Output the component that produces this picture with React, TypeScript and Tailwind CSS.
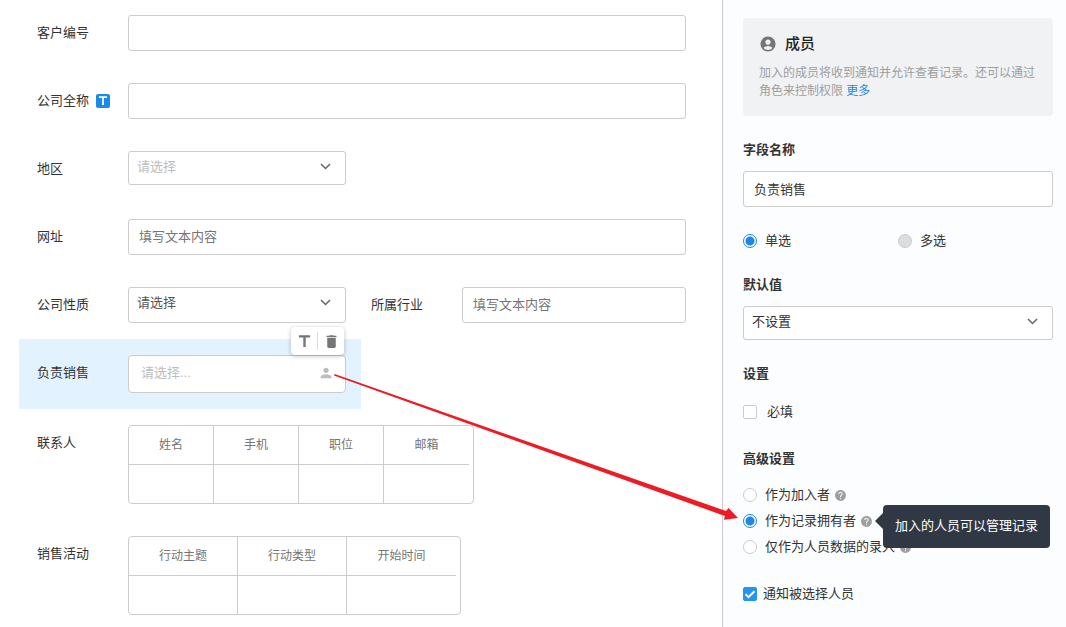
import { useState } from "react";
import type { ReactNode } from "react";
import { MdAccountCircle, MdDelete, MdHelp, MdPerson, MdTitle } from "react-icons/md";

const inputClass =
  "block h-9 w-full rounded-[3px] border border-[#ccc] bg-white px-[10px] pb-[2px] text-[#333] placeholder:text-[#757575] outline-none focus:border-[#2196f3]";

const radioClass =
  "size-[14px] shrink-0 appearance-none rounded-full border border-[#ccc] bg-white checked:border-[#1e88e5] checked:bg-[radial-gradient(circle,#1e88e5_4px,#fff_5px)] disabled:bg-[#ddd]";

const Chevron = () => (
  <svg width="11" height="7" viewBox="0 0 11 7" fill="none" stroke="#666" strokeWidth="1.5" aria-hidden="true">
    <path d="M1 1l4.5 4.5L10 1" />
  </svg>
);

type FieldProps = {
  id?: string;
  label: string;
  icon?: ReactNode;
  className?: string;
  children: ReactNode;
};

const Field = ({ id, label, icon, className = "col-span-2 pl-[18px] pr-[17px]", children }: FieldProps) => (
  <div className={`flex min-h-9 items-start ${className}`}>
    <label htmlFor={id} className="flex h-9 w-[91px] shrink-0 items-center gap-[7px]">
      {label}
      {icon}
    </label>
    <div className="relative min-w-0 flex-1">{children}</div>
  </div>
);

type SelectProps = {
  id: string;
  option: string;
  className: string;
};

const Select = ({ id, option, className }: SelectProps) => (
  <div className="relative">
    <select
      id={id}
      className={`block w-full appearance-none rounded-[3px] border border-[#ccc] bg-white pl-2 pr-8 outline-none ${className}`}
    >
      <option>{option}</option>
    </select>
    <span className="pointer-events-none absolute right-[15px] top-3">
      <Chevron />
    </span>
  </div>
);

type SubTableProps = {
  label: string;
  columns: string[];
  cellClass: string;
};

const SubTable = ({ label, columns, cellClass }: SubTableProps) => (
  <div className="w-fit rounded-[4px] border border-[#ccc] pr-1">
    <table aria-label={label} className="border-separate border-spacing-0 text-xs text-[#757575]">
      <thead>
        <tr>
          {columns.map((c) => (
            <th
              key={c}
              scope="col"
              className={`h-[39px] border-b border-r border-[#ccc] p-0 font-normal last:border-r-0 ${cellClass}`}
            >
              {c}
            </th>
          ))}
        </tr>
      </thead>
      <tbody>
        <tr>
          {columns.map((c) => (
            <td key={c} className="h-[38px] border-r border-[#ccc] p-0 last:border-r-0" />
          ))}
        </tr>
      </tbody>
    </table>
  </div>
);

const roles = [
  { id: "join", label: "作为加入者" },
  { id: "owner", label: "作为记录拥有者", tip: "加入的人员可以管理记录" },
  { id: "entry", label: "仅作为人员数据的录入" },
];

function FormCanvas() {
  return (
    <main className="grid min-w-0 flex-1 grid-cols-2 content-start gap-y-8 bg-white px-[19px] pb-3 pt-[15px]">
      <Field id="code" label="客户编号">
        <input id="code" className={inputClass} />
      </Field>
      <Field
        id="company"
        label="公司全称"
        icon={
          <span className="flex size-[14px] items-center justify-center rounded-[2px] bg-[#1e88e5] text-white">
            <MdTitle size={14} />
          </span>
        }
      >
        <input id="company" className={inputClass} />
      </Field>
      <Field id="region" label="地区" className="pl-[18px] pr-[15px]">
        <Select id="region" option="请选择" className="h-[34px] pb-[2px] text-[#bdbdbd]" />
      </Field>
      <Field id="site" label="网址">
        <input id="site" placeholder="填写文本内容" className={inputClass} />
      </Field>
      <Field id="nature" label="公司性质" className="pl-[18px] pr-[15px]">
        <Select id="nature" option="请选择" className="h-9 pb-1 text-[#555]" />
      </Field>
      <Field id="industry" label="所属行业" className="pl-[10px] pr-[17px]">
        <input id="industry" placeholder="填写文本内容" className={inputClass} />
      </Field>

      {/* Selected field */}
      <Field id="sales" label="负责销售" className="-my-4 bg-[#e3f2ff] py-4 pl-[18px] pr-[15px]">
        <button
          id="sales"
          type="button"
          className="flex h-[38px] w-full items-center justify-between rounded-[4px] border border-[#ccc] bg-white pl-3 pr-[11px] pb-[2px] text-[#bdbdbd]"
        >
          请选择...
          <MdPerson size={16} />
        </button>
        <div className="absolute -top-7 right-[2px] flex h-7 w-[53px] items-center rounded-[4px] bg-white text-[#757575] shadow-[0_1px_4px_rgba(0,0,0,0.25)]">
          <button type="button" aria-label="标题字段" className="flex flex-1 justify-center">
            <MdTitle size={19} />
          </button>
          <span className="h-[18px] w-px bg-[#ddd]" />
          <button type="button" aria-label="删除" className="flex flex-1 justify-center">
            <MdDelete size={17} />
          </button>
        </div>
      </Field>

      <Field label="联系人">
        <SubTable label="联系人" columns={["姓名", "手机", "职位", "邮箱"]} cellClass="w-[85px] min-w-[85px]" />
      </Field>
      <Field label="销售活动">
        <SubTable label="销售活动" columns={["行动主题", "行动类型", "开始时间"]} cellClass="w-[109px] min-w-[109px]" />
      </Field>
    </main>
  );
}

function SettingsPanel() {
  const [mode, setMode] = useState("single");
  const [role, setRole] = useState("owner");
  const [notify, setNotify] = useState(true);

  return (
    <aside className="flex w-[344px] shrink-0 flex-col border-l border-[#ccc] bg-[#fcfdff] pb-6 pl-5 pr-[13px] pt-[18px]">
      <section className="rounded-[4px] bg-[#f1f2f4] px-4 py-4">
        <h2 className="flex h-5 items-center gap-2 text-[15px] font-medium text-[#222]">
          <MdAccountCircle size={18} className="text-[#757575]" />
          成员
        </h2>
        <p className="mt-[10px] text-xs leading-[18px] text-[#9e9e9e]">
          加入的成员将收到通知并允许查看记录。还可以通过角色来控制权限{" "}
          <a href="#more" className="text-[#1e88e5]">
            更多
          </a>
        </p>
      </section>

      <label htmlFor="field-name" className="mb-3 mt-[25px] font-bold">
        字段名称
      </label>
      <input id="field-name" defaultValue="负责销售" className={inputClass} />

      <div className="mt-[25px] grid grid-cols-2">
        <label className="flex items-center gap-2">
          <input
            type="radio"
            name="mode"
            checked={mode === "single"}
            onChange={() => setMode("single")}
            className={radioClass}
          />
          单选
        </label>
        <label className="flex items-center gap-2">
          <input type="radio" name="mode" disabled className={radioClass} />
          多选
        </label>
      </div>

      <label htmlFor="default-value" className="mb-3 mt-[26px] font-bold">
        默认值
      </label>
      <Select id="default-value" option="不设置" className="h-[34px] pb-[2px]" />

      <h3 className="mt-[25px] font-bold">设置</h3>
      <label className="mt-5 flex items-center gap-[10px]">
        <input type="checkbox" className="size-[14px] appearance-none rounded-[2px] border border-[#ccc] bg-white checked:bg-[#2196f3]" />
        必填
      </label>

      <h3 className="mt-[29px] font-bold">高级设置</h3>
      <div className="mt-[18px] flex flex-col gap-2">
        {roles.map((r) => (
          <div key={r.id} className="flex items-center gap-1">
            <label className="flex items-center gap-2">
              <input
                type="radio"
                name="role"
                checked={role === r.id}
                onChange={() => setRole(r.id)}
                className={radioClass}
              />
              {r.label}
            </label>
            <span className="relative text-[#9e9e9e]">
              <MdHelp size={13} />
              {r.tip && (
                <span
                  role="tooltip"
                  className="absolute -top-[10px] left-[23px] z-10 flex h-[43px] items-center whitespace-nowrap rounded-[4px] bg-[#303844] px-3 text-white"
                >
                  <svg width="8" height="16" viewBox="0 0 8 16" className="absolute -left-2 top-2" aria-hidden="true">
                    <path d="M8 0v16L0 8z" fill="#303844" />
                  </svg>
                  {r.tip}
                </span>
              )}
            </span>
          </div>
        ))}
      </div>

      <label className="mt-[29px] flex items-center gap-[6px]">
        <span className="relative flex">
          <input
            type="checkbox"
            checked={notify}
            onChange={(e) => setNotify(e.target.checked)}
            className="size-[14px] appearance-none rounded-[2px] border border-[#ccc] bg-white checked:border-[#2196f3] checked:bg-[#2196f3]"
          />
          {notify && (
            <svg
              width="14"
              height="14"
              viewBox="0 0 14 14"
              fill="none"
              stroke="#fff"
              strokeWidth="2"
              className="pointer-events-none absolute inset-0"
              aria-hidden="true"
            >
              <path d="M2.5 7.2l3 3 6-6" />
            </svg>
          )}
        </span>
        通知被选择人员
      </label>
    </aside>
  );
}

export default function App() {
  return (
    <div className="relative flex min-h-screen overflow-hidden font-['Liberation_Sans','Noto_Sans_CJK_SC',sans-serif] text-[13px] leading-[18px] text-[#333]">
      <FormCanvas />
      <SettingsPanel />

      {/* Arrow from the member field to its setting */}
      <svg
        width="404"
        height="147"
        viewBox="0 0 404 147"
        className="pointer-events-none absolute right-[328px] top-[374px]"
        aria-hidden="true"
      >
        <path d="M0 1.4L0.6 0L392 137L394.5 134L404 144L390 145.8L390.8 142Z" fill="#ed1c24" />
      </svg>
    </div>
  );
}
